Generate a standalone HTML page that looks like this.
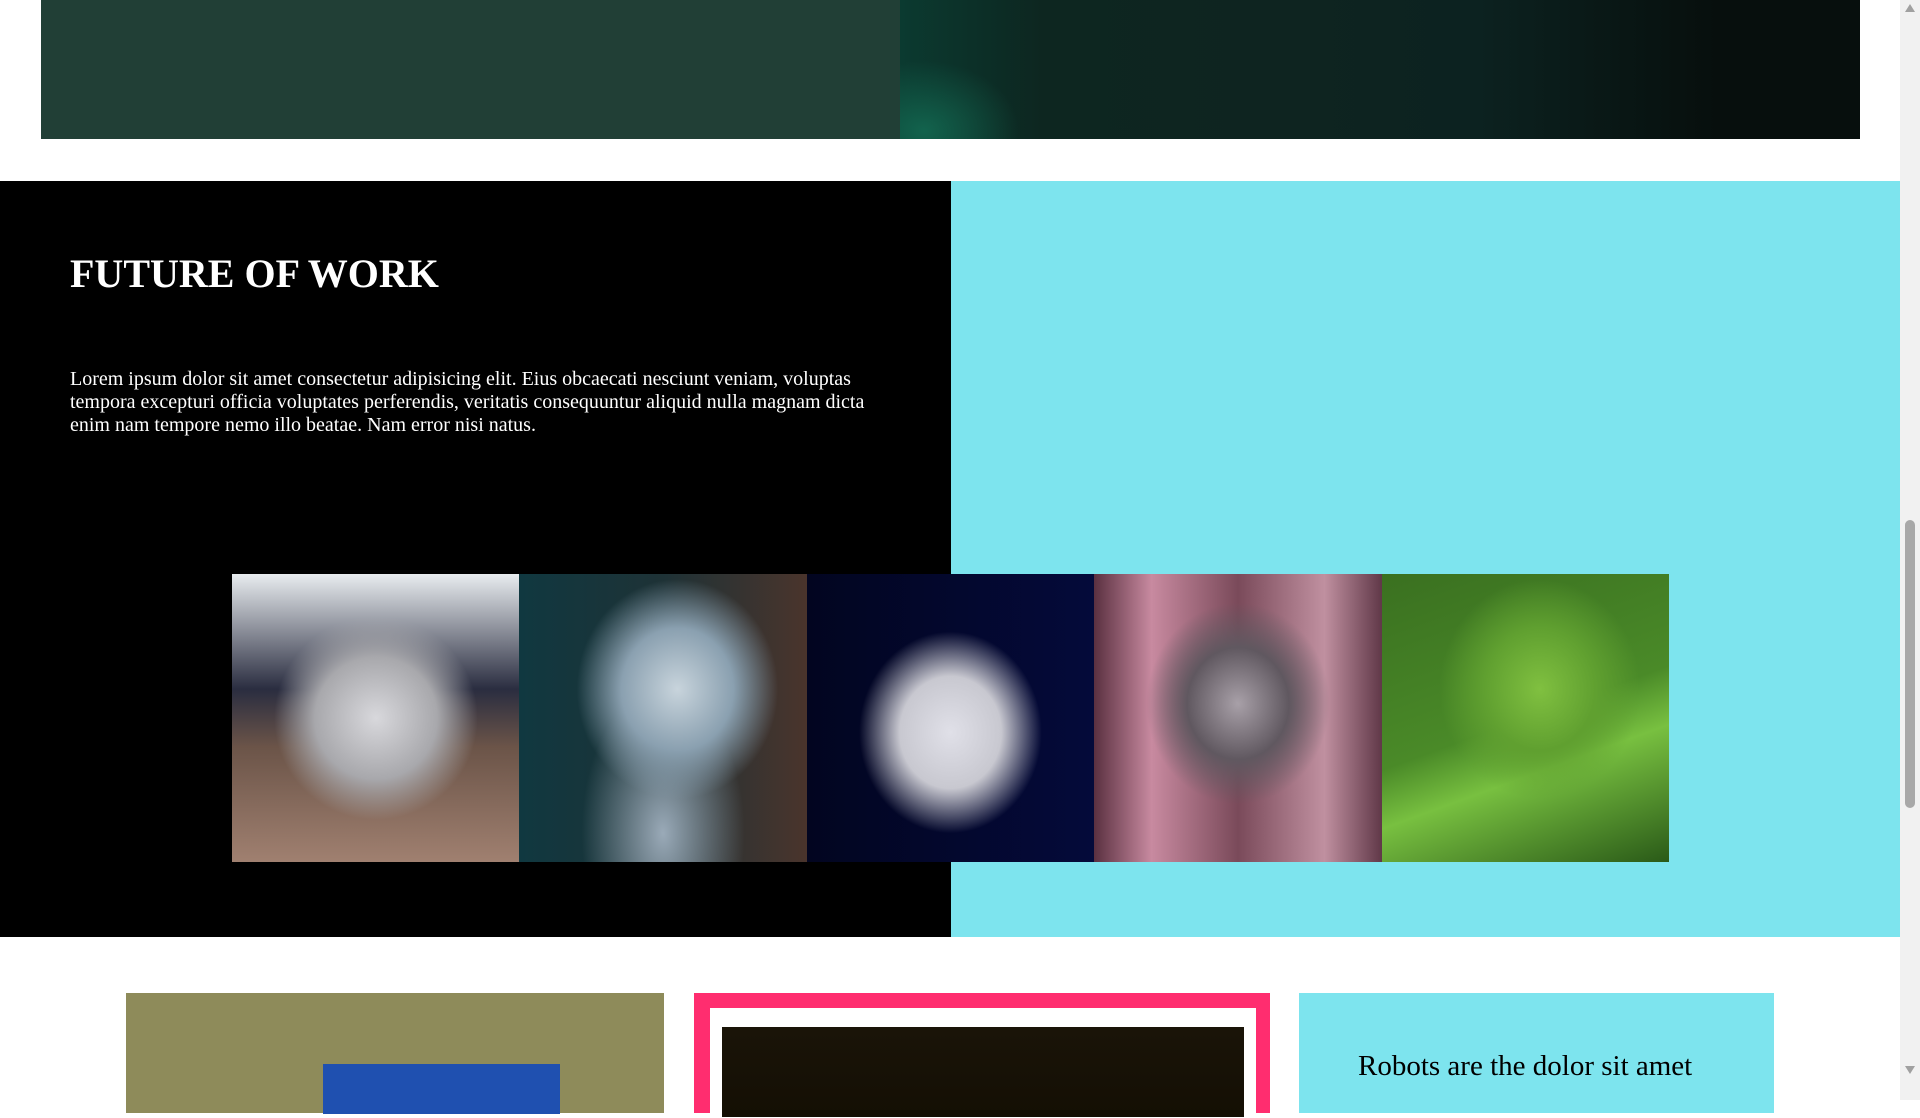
<!DOCTYPE html>
<html><head><meta charset="utf-8"><style>
html,body{margin:0;padding:0;width:1920px;height:1080px;overflow:hidden;background:#fff;font-family:"Liberation Serif",serif;}
.abs{position:absolute}
</style></head><body>
<div class="abs" style="left:41px;top:0;width:859px;height:139px;background:#213f36"></div>
<div class="abs" style="left:900px;top:0;width:960px;height:139px;background:linear-gradient(90deg,#0b3a30 0%,#0d2620 15%,#0e2420 40%,#0c2220 60%,#070f0d 85%,#070f0d 100%)"></div>
<div class="abs" style="left:900px;top:60px;width:120px;height:79px;background:radial-gradient(ellipse at 20% 90%,rgba(20,110,85,.8),rgba(20,110,85,0) 70%)"></div>

<div class="abs" style="left:0;top:181px;width:951px;height:756px;background:#000"></div>
<div class="abs" style="left:951px;top:181px;width:949px;height:756px;background:#7de4ee"></div>
<div class="abs" style="left:70px;top:250px;color:#fff;font-weight:bold;font-size:40px;line-height:48px">FUTURE OF WORK</div>
<div class="abs" style="left:70px;top:368px;width:880px;white-space:nowrap;color:#fff;font-size:20px;line-height:23px">Lorem ipsum dolor sit amet consectetur adipisicing elit. Eius obcaecati nesciunt veniam, voluptas<br>tempora excepturi officia voluptates perferendis, veritatis consequuntur aliquid nulla magnam dicta<br>enim nam tempore nemo illo beatae. Nam error nisi natus.</div>

<div class="abs" style="left:232px;top:574px;width:288px;height:288px;background:radial-gradient(ellipse at 50% 50%,#d8d8dc 0%,#a8a8ac 30%,transparent 50%),linear-gradient(180deg,#e8ecef 0%,#2a2d40 40%,#6b5448 60%,#a08070 100%)"></div>
<div class="abs" style="left:519px;top:574px;width:288px;height:288px;background:radial-gradient(ellipse at 55% 40%,#c8d4dc 0%,#8aa0b0 25%,transparent 45%),radial-gradient(ellipse at 50% 90%,#9aaab8 0%,transparent 40%),linear-gradient(90deg,#103840 0%,#1e3236 50%,#4a342c 100%)"></div>
<div class="abs" style="left:807px;top:574px;width:287px;height:288px;background:radial-gradient(ellipse at 50% 55%,#e0e0e8 0%,#c8c8d0 25%,transparent 45%),linear-gradient(90deg,#020520 0%,#040a3a 100%)"></div>
<div class="abs" style="left:1094px;top:574px;width:288px;height:288px;background:radial-gradient(ellipse at 50% 45%,#a8a0a8 0%,#605860 25%,transparent 45%),linear-gradient(90deg,#5a3040 0%,#c88aa0 20%,#7a4a5a 50%,#c090a0 80%,#603848 100%)"></div>
<div class="abs" style="left:1382px;top:574px;width:287px;height:288px;background:radial-gradient(ellipse at 55% 40%,#80c040 0%,#60a030 25%,transparent 45%),linear-gradient(160deg,#3a7020 0%,#4a8a28 50%,#78c040 65%,#2a5a18 100%)"></div>

<div class="abs" style="left:126px;top:993px;width:538px;height:120px;background:#8e8b5a"></div>
<div class="abs" style="left:323px;top:1064px;width:237px;height:50px;background:#1f50b0"></div>
<div class="abs" style="left:694px;top:993px;width:576px;height:120px;background:#ff2d6f"></div>
<div class="abs" style="left:710px;top:1008px;width:546px;height:110px;background:#fff"></div>
<div class="abs" style="left:722px;top:1027px;width:522px;height:90px;background:linear-gradient(180deg,#1a1408,#140f04)"></div>
<div class="abs" style="left:1299px;top:993px;width:475px;height:120px;background:#7de4ee"></div>
<div class="abs" style="left:1358px;top:1050px;font-size:29px;color:#000;white-space:nowrap">Robots are the dolor sit amet</div>

<div class="abs" style="left:1900px;top:0;width:20px;height:1100px;background:#f1f1f1"></div>
<div class="abs" style="left:1905px;top:520px;width:10px;height:288px;background:#a8a8a8;border-radius:5px"></div>
<div class="abs" style="left:1905px;top:4px;width:0;height:0;border-left:5px solid transparent;border-right:5px solid transparent;border-bottom:8px solid #a0a0a0"></div>
<div class="abs" style="left:1905px;top:1066px;width:0;height:0;border-left:5px solid transparent;border-right:5px solid transparent;border-top:8px solid #a0a0a0"></div>
</body></html>
